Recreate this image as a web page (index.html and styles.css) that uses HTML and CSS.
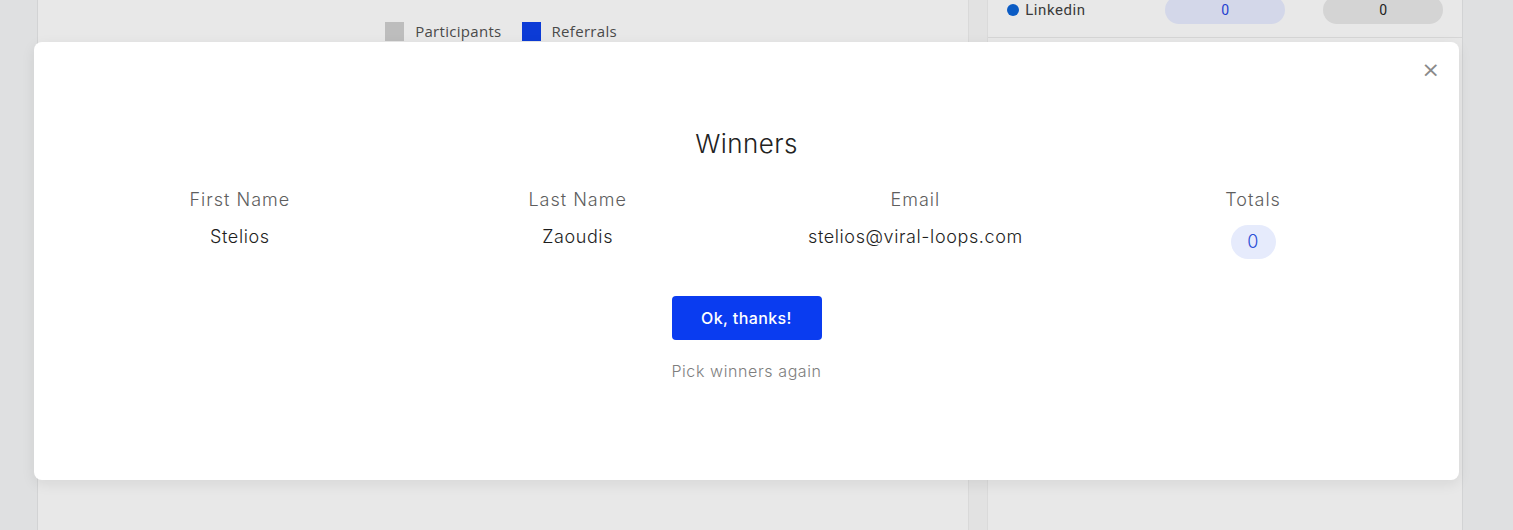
FILE: index.html
```html
<!DOCTYPE html>
<html lang="en">
<head>
  <meta charset="UTF-8">
  <meta name="viewport" content="width=device-width, initial-scale=1.0">
  <title>Winners</title>
  <link rel="stylesheet" href="styles.css">
</head>
<body>
  <div class="page">
    <div class="side"></div>
    <div class="main">
      <div class="panel chart-panel">
        <div class="legend">
          <span class="swatch swatch-grey"></span><span class="legend-label">Participants</span>
          <span class="swatch swatch-blue"></span><span class="legend-label">Referrals</span>
        </div>
      </div>
      <div class="gap"></div>
      <div class="panel stats-panel">
        <div class="stats-row">
          <div class="network"><span class="dot"></span>Linkedin</div>
          <span class="pill pill-blue">0</span>
          <span class="pill pill-grey">0</span>
        </div>
      </div>
    </div>
    <div class="side side-right"></div>
  </div>

  <div class="modal">
    <button class="close" type="button" aria-label="Close">&times;</button>
    <h2>Winners</h2>
    <div class="winners">
      <div class="col">
        <div class="head">First Name</div>
        <div class="cell">Stelios</div>
      </div>
      <div class="col">
        <div class="head">Last Name</div>
        <div class="cell">Zaoudis</div>
      </div>
      <div class="col">
        <div class="head">Email</div>
        <div class="cell">stelios@viral-loops.com</div>
      </div>
      <div class="col">
        <div class="head">Totals</div>
        <div class="cell"><span class="total">0</span></div>
      </div>
    </div>
    <button class="ok" type="button">Ok, thanks!</button>
    <a class="again" href="#">Pick winners again</a>
  </div>
</body>
</html>
```

FILE: styles.css
```css
body {
  margin: 0;
  padding: 0;
  font-family: Inter, "Open Sans", sans-serif;
  background-color: #dfe0e1;
  overflow: hidden;
}

.page {
  display: flex;
  height: 530px;
}

.side {
  width: 38px;
  background-color: #dfe0e1;
  border-right: 1px solid #d2d3d4;
}

.side-right {
  width: 51px;
  border-right: none;
  border-left: 1px solid #d2d3d4;
}

.main {
  flex: 1;
  display: flex;
  background-color: #e8e8e8;
}

.chart-panel {
  width: 930px;
  border-right: 1px solid #d9d9d9;
}

.gap {
  width: 18px;
  background-color: #e2e2e2;
  border-right: 1px solid #dadada;
}

.stats-panel {
  flex: 1;
}

.legend {
  display: flex;
  align-items: center;
  padding: 21px 0 0 347px;
  font-family: "Open Sans", sans-serif;
  font-size: 15px;
  color: #4a4a4a;
}

.swatch {
  width: 19px;
  height: 19px;
  margin-right: 11px;
}

.swatch-grey {
  background-color: #bdbdbd;
}

.swatch-blue {
  background-color: #0c3bd6;
}

.legend-label {
  margin-right: 20px;
  letter-spacing: 0.3px;
}

.stats-row {
  display: flex;
  align-items: center;
  height: 26px;
  padding: 0 19px 14px 19px;
  margin-top: -3px;
  border-bottom: 1px solid #d6d6d6;
  font-family: Roboto, sans-serif;
  font-size: 15px;
  color: #3a3a3a;
}

.network {
  display: flex;
  align-items: center;
  width: 158px;
  letter-spacing: 0.6px;
}

.dot {
  width: 12px;
  height: 12px;
  border-radius: 50%;
  background-color: #0a5bc4;
  margin-right: 6px;
}

.pill {
  width: 120px;
  height: 28px;
  line-height: 28px;
  border-radius: 14px;
  text-align: center;
  font-size: 14px;
}

.pill-blue {
  background-color: #d3d7e9;
  color: #1f3fd0;
  margin-right: 38px;
}

.pill-grey {
  background-color: #d4d4d4;
  color: #222;
}

.modal {
  position: absolute;
  left: 34px;
  top: 42px;
  width: 1425px;
  height: 438px;
  box-sizing: border-box;
  padding: 85px 37px 0 37px;
  background: white;
  border-radius: 8px;
  box-shadow: 0px 4px 14px rgba(0, 0, 0, 0.08);
  display: flex;
  flex-direction: column;
  align-items: center;
}

.close {
  position: absolute;
  top: 17px;
  right: 19px;
  border: none;
  background: none;
  padding: 0;
  font-family: "DejaVu Sans", sans-serif;
  font-size: 22px;
  line-height: 22px;
  color: #8a8a8a;
  cursor: pointer;
}

h2 {
  margin: 0;
  font-size: 26px;
  font-weight: 300;
  line-height: 34px;
  letter-spacing: 0.4px;
  color: #222;
}

.winners {
  display: grid;
  grid-template-columns: repeat(4, 1fr);
  width: 100%;
  margin-top: 26px;
}

.col {
  text-align: center;
}

.head {
  font-size: 18px;
  font-weight: 300;
  line-height: 26px;
  letter-spacing: 1px;
  color: #5e5e5e;
}

.cell {
  margin-top: 12px;
  font-size: 18px;
  font-weight: 300;
  line-height: 24px;
  letter-spacing: 0.6px;
  color: #1e1e1e;
}

.total {
  display: block;
  width: 45px;
  height: 34px;
  line-height: 34px;
  margin: 0 auto;
  border-radius: 17px;
  background-color: #e6ebfc;
  color: #2a4ed6;
}

.ok {
  margin-top: 37px;
  width: 150px;
  height: 44px;
  border: none;
  border-radius: 4px;
  background-color: #0a3cf0;
  color: white;
  font-family: Inter, sans-serif;
  font-size: 16px;
  font-weight: 500;
  letter-spacing: 0.4px;
  cursor: pointer;
}

.again {
  margin-top: 21px;
  font-size: 16px;
  font-weight: 300;
  letter-spacing: 0.6px;
  color: #7e7e7e;
  text-decoration: none;
}
```
